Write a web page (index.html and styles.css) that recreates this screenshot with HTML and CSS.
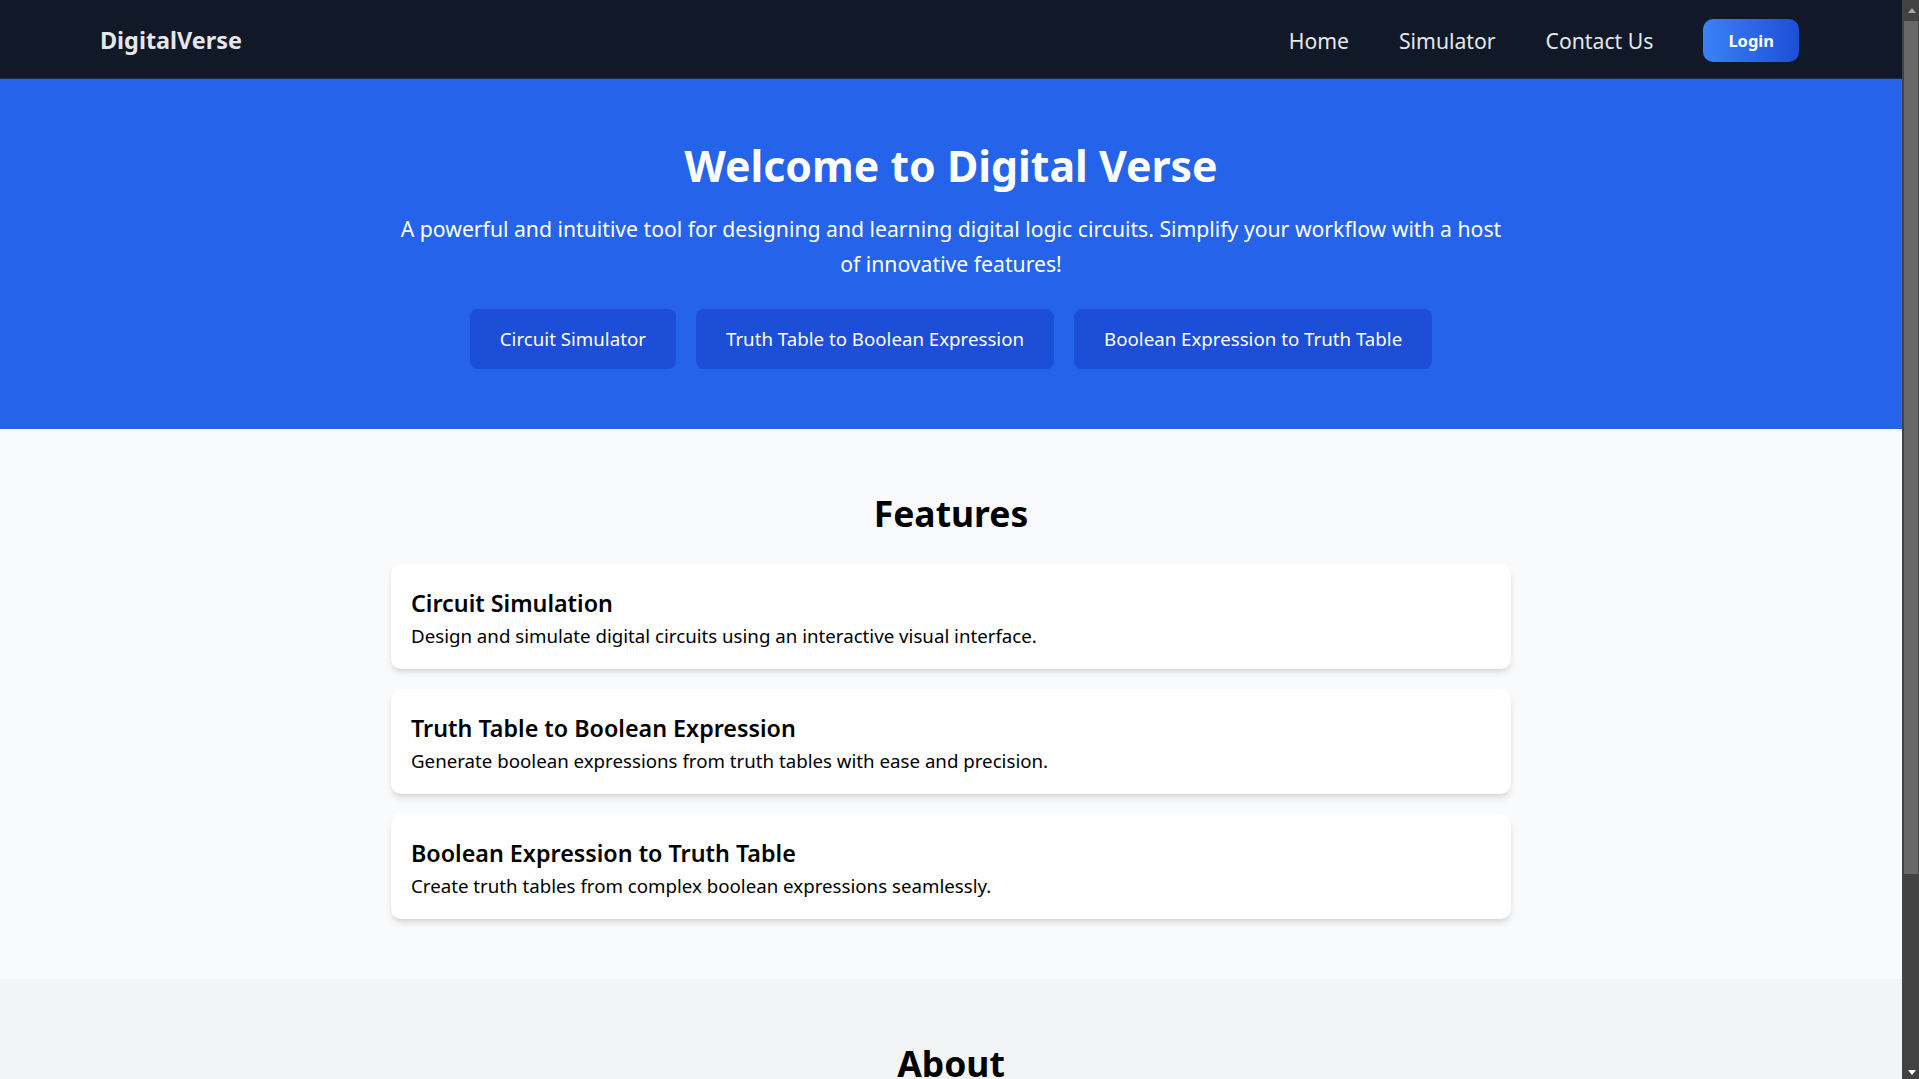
FILE: index.html
```html
<!DOCTYPE html>
<html lang="en">
<head>
<meta charset="utf-8">
<title>DigitalVerse</title>
<link rel="stylesheet" href="styles.css">
</head>
<body>
<header class="navbar">
  <div class="logo">DigitalVerse</div>
  <nav class="nav-links">
    <a href="#" class="nav-link">Home</a>
    <a href="#" class="nav-link">Simulator</a>
    <a href="#" class="nav-link">Contact Us</a>
    <button class="login-btn">Login</button>
  </nav>
</header>

<section class="hero">
  <h1 class="hero-title">Welcome to Digital Verse</h1>
  <p class="hero-text">A powerful and intuitive tool for designing and learning digital logic circuits. Simplify your workflow with a host of innovative features!</p>
  <div class="hero-actions">
    <a href="#" class="hero-btn">Circuit Simulator</a>
    <a href="#" class="hero-btn">Truth Table to Boolean Expression</a>
    <a href="#" class="hero-btn">Boolean Expression to Truth Table</a>
  </div>
</section>

<section class="features">
  <h2 class="section-title">Features</h2>
  <div class="card-list">
    <div class="card">
      <h3 class="card-title">Circuit Simulation</h3>
      <p class="card-text">Design and simulate digital circuits using an interactive visual interface.</p>
    </div>
    <div class="card">
      <h3 class="card-title">Truth Table to Boolean Expression</h3>
      <p class="card-text">Generate boolean expressions from truth tables with ease and precision.</p>
    </div>
    <div class="card">
      <h3 class="card-title">Boolean Expression to Truth Table</h3>
      <p class="card-text">Create truth tables from complex boolean expressions seamlessly.</p>
    </div>
  </div>
</section>

<section class="about">
  <h2 class="section-title">About</h2>
  <p class="about-text">DigitalVerse is an educational platform built to help students and engineers explore the world of digital logic. Design, test and understand circuits with ease.</p>
</section>

<footer class="footer">
  <p>&copy; 2024 DigitalVerse. All rights reserved.</p>
</footer>

<div class="scrollbar" aria-hidden="true">
  <div class="scroll-arrow scroll-up"></div>
  <div class="scroll-track">
    <div class="scroll-thumb"></div>
  </div>
  <div class="scroll-arrow scroll-down"></div>
</div>
</body>
</html>
```

FILE: styles.css
```css
* {
  box-sizing: border-box;
}

html {
  background: #f3f4f6;
}

body {
  margin: 0 17px 0 0;
  font-family: "Noto Sans", "Open Sans", "Liberation Sans", sans-serif;
  color: #000;
}

/* Fake window scrollbar (drawn over the right edge) */
.scrollbar {
  position: fixed;
  top: 0;
  right: 0;
  width: 17px;
  height: 100vh;
  background: #424242;
  display: flex;
  flex-direction: column;
}

.scroll-arrow {
  height: 21px;
  display: flex;
  align-items: center;
  justify-content: center;
}

.scroll-up::before {
  content: "";
  width: 0;
  height: 0;
  border-left: 4.5px solid transparent;
  border-right: 4.5px solid transparent;
  border-bottom: 5px solid #a8a8a8;
  margin-left: 2px;
  margin-top: -1px;
}

.scroll-down {
  height: 17px;
}

.scroll-down::before {
  content: "";
  width: 0;
  height: 0;
  border-left: 4.5px solid transparent;
  border-right: 4.5px solid transparent;
  border-top: 5px solid #ffffff;
  margin-left: 2px;
  margin-top: 3px;
}

.scroll-track {
  flex: 1;
  padding: 0 1px 0 2px;
}

.scroll-thumb {
  height: 853px;
  background: #686868;
}

/* Navbar */
.navbar {
  height: 79px;
  background: #111827;
  border-bottom: 1px solid #1f2937;
  display: flex;
  align-items: center;
  justify-content: space-between;
  padding: 3px 103px 0 100px;
}

.logo {
  color: #e5e7eb;
  font-size: 23.4px;
  font-weight: 700;
  line-height: 35px;
}

.nav-links {
  display: flex;
  align-items: center;
  gap: 50px;
}

.nav-link {
  color: #e5e7eb;
  text-decoration: none;
  font-size: 21.2px;
  line-height: 35px;
}

.login-btn {
  font-family: inherit;
  font-size: 16.5px;
  font-weight: 700;
  line-height: 25px;
  color: #fff;
  border: none;
  border-radius: 10px;
  padding: 9px 25px;
  background: linear-gradient(to right, #3b82f6, #1d4ed8);
}

/* Hero */
.hero {
  background: #2563eb;
  color: #fff;
  text-align: center;
  padding: 62px 20px 60px;
}

.hero-title {
  margin: 0 0 20px;
  font-size: 42.8px;
  line-height: 50px;
  font-weight: 700;
}

.hero-text {
  margin: 0 auto 28px;
  max-width: 1120px;
  font-size: 21.2px;
  line-height: 35px;
}

.hero-actions {
  display: flex;
  justify-content: center;
  gap: 20px;
}

.hero-btn {
  background: #1d4ed8;
  color: #fff;
  text-decoration: none;
  font-size: 18.7px;
  line-height: 30px;
  padding: 15px 30px;
  border-radius: 7.5px;
}

/* Sections */
.features {
  background: #f9fafb;
  padding: 62px 20px 60px;
}

.section-title {
  margin: 0 0 28px;
  text-align: center;
  font-size: 35.5px;
  line-height: 45px;
  font-weight: 700;
}

.card-list {
  max-width: 1120px;
  margin: 0 auto;
  display: flex;
  flex-direction: column;
  gap: 20px;
}

.card {
  background: #fff;
  border-radius: 10px;
  padding: 22px 20px 18px;
  box-shadow: 0 5px 7.5px -1.25px rgba(0, 0, 0, 0.1), 0 2.5px 5px -2.5px rgba(0, 0, 0, 0.1);
}

.card-title {
  margin: 0;
  font-size: 23.3px;
  line-height: 35px;
  font-weight: 600;
}

.card-text {
  margin: 0;
  font-size: 18.7px;
  line-height: 30px;
}

.about {
  background: #f3f4f6;
  padding: 62px 20px 60px;
}

.about-text {
  max-width: 1120px;
  margin: 0 auto;
  text-align: center;
  font-size: 21.2px;
  line-height: 35px;
  color: #374151;
}

.footer {
  background: #111827;
  color: #e5e7eb;
  text-align: center;
  padding: 25px 20px;
}

.footer p {
  margin: 0;
  font-size: 18.7px;
  line-height: 30px;
}
```
